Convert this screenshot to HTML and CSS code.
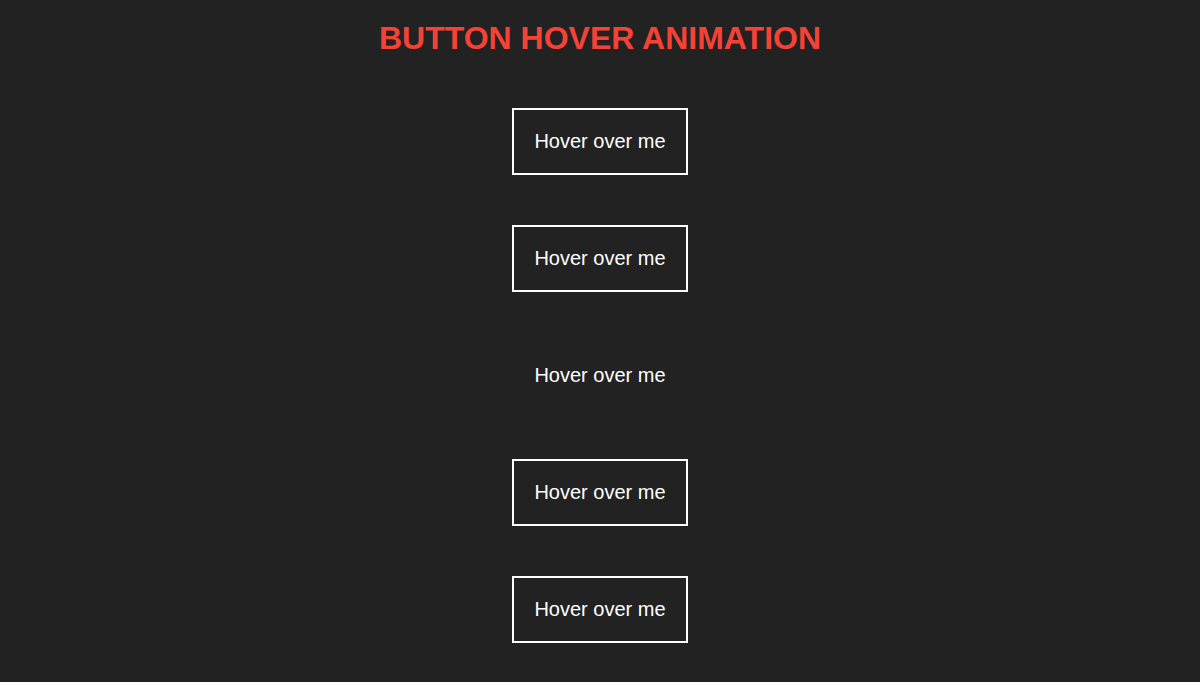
FILE: index.html
```html
<!DOCTYPE html>
<html lang="en">
<head>
    <meta charset="UTF-8">
    <meta name="viewport" content="width=device-width, initial-scale=1.0">
    <title>Button Hover Animation</title>
    <link rel="stylesheet" href="styles.css">
</head>
<body>
    <h1>Button Hover Animation</h1>

    <div class="buttons">
        <!-- Fill from left -->
        <button class="btn btn-fill">Hover over me</button>

        <!-- Slide underline -->
        <button class="btn btn-slide">Hover over me</button>

        <!-- Border draw -->
        <button class="btn btn-draw">Hover over me</button>

        <!-- Glow -->
        <button class="btn btn-glow">Hover over me</button>

        <!-- Shrink -->
        <button class="btn btn-shrink">Hover over me</button>
    </div>
</body>
</html>
```

FILE: styles.css
```css
/* CSS Styles */
* {
    box-sizing: border-box;
    font-family: 'Liberation Sans', Arial, Helvetica, sans-serif;
}

body {
    background-color: #222;
    margin: 0;
    padding: 20px;
    color: #fff;
}

h1 {
    margin: 0 0 51px;
    text-align: center;
    color: #f44336;
    font-size: 32px;
    text-transform: uppercase;
}

.buttons {
    display: flex;
    flex-direction: column;
    align-items: center;
    gap: 50px;
}

.btn {
    width: 176px;
    height: 67px;
    padding: 0;
    background: transparent;
    color: #fff;
    border: 2px solid #fff;
    font-size: 20px;
    cursor: pointer;
    transition: all 0.3s;
}

.btn-fill:hover {
    background-color: #fff;
    color: #222;
}

.btn-slide:hover {
    box-shadow: inset 0 -4px 0 #f44336;
}

.btn-draw {
    border-color: transparent;
}

.btn-draw:hover {
    border-color: #fff;
}

.btn-glow:hover {
    box-shadow: 0 0 15px #f44336;
}

.btn-shrink:hover {
    transform: scale(0.95);
}
```
